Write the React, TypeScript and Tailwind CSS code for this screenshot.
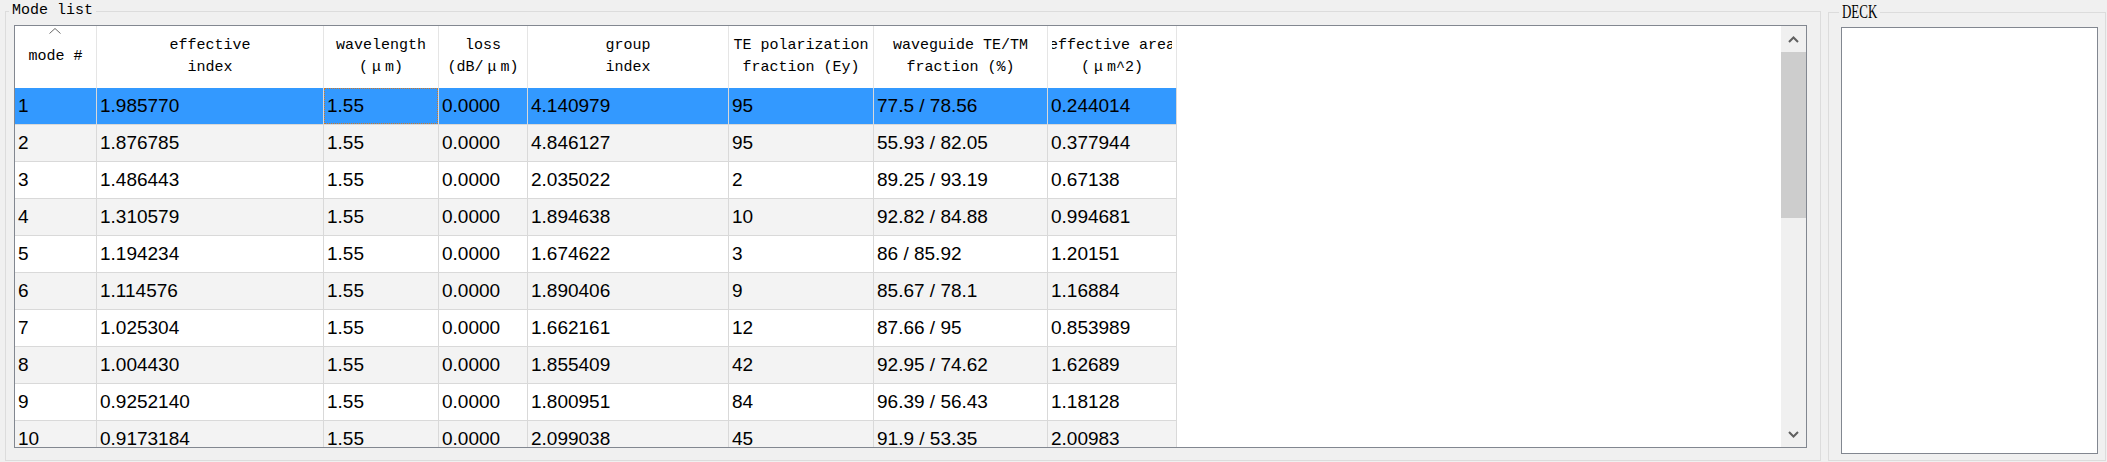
import React from "react";

const widths = [82, 227, 115, 89, 201, 145, 174, 129];

const headers: React.ReactNode[][] = [
  [["mode #"]],
  [["effective"], ["index"]],
  [["wavelength"], ["(", <span key="u" className="px-[4px]">μ</span>, "m)"]],
  [["loss"], ["(dB/", <span key="u" className="px-[4px]">μ</span>, "m)"]],
  [["group"], ["index"]],
  [["TE polarization"], ["fraction (Ey)"]],
  [["waveguide TE/TM"], ["fraction (%)"]],
  [["effective area"], ["(", <span key="u" className="px-[4px]">μ</span>, "m^2)"]],
];

const rows = [
  ["1", "1.985770", "1.55", "0.0000", "4.140979", "95", "77.5 / 78.56", "0.244014"],
  ["2", "1.876785", "1.55", "0.0000", "4.846127", "95", "55.93 / 82.05", "0.377944"],
  ["3", "1.486443", "1.55", "0.0000", "2.035022", "2", "89.25 / 93.19", "0.67138"],
  ["4", "1.310579", "1.55", "0.0000", "1.894638", "10", "92.82 / 84.88", "0.994681"],
  ["5", "1.194234", "1.55", "0.0000", "1.674622", "3", "86 / 85.92", "1.20151"],
  ["6", "1.114576", "1.55", "0.0000", "1.890406", "9", "85.67 / 78.1", "1.16884"],
  ["7", "1.025304", "1.55", "0.0000", "1.662161", "12", "87.66 / 95", "0.853989"],
  ["8", "1.004430", "1.55", "0.0000", "1.855409", "42", "92.95 / 74.62", "1.62689"],
  ["9", "0.9252140", "1.55", "0.0000", "1.800951", "84", "96.39 / 56.43", "1.18128"],
  ["10", "0.9173184", "1.55", "0.0000", "2.099038", "45", "91.9 / 53.35", "2.00983"],
];

const Chevron = ({ up }: { up?: boolean }) => (
  <svg width="11" height="7" viewBox="0 0 11 7">
    <polyline
      points={up ? "1,6 5.5,1.5 10,6" : "1,1 5.5,5.5 10,1"}
      fill="none"
      stroke="#606060"
      strokeWidth="2"
    />
  </svg>
);

const ModeTable = () => (
  <div className="flex-1 overflow-hidden">
    <div className="flex h-[62px] bg-white font-['Liberation_Mono',monospace] text-[15px] leading-[22px] text-black">
      {headers.map((lines, i) => (
        <div
          key={i}
          style={{ width: widths[i] }}
          className="relative flex shrink-0 border-r border-[#e5e5e5] px-[4px]"
        >
          {i === 0 && (
            <svg className="absolute left-[34px] top-[2px]" width="12" height="6" viewBox="0 0 12 6">
              <polyline points="0.5,5.5 6,0.5 11.5,5.5" fill="none" stroke="#6a6a6a" strokeWidth="1" />
            </svg>
          )}
          <div className="flex w-full flex-col items-center justify-center overflow-hidden">
            {lines.map((l, j) => (
              <div key={j} className="whitespace-nowrap">
                {l}
              </div>
            ))}
          </div>
        </div>
      ))}
    </div>
    {rows.map((r, ri) => (
      <div key={ri} className="flex h-[37px] font-['Liberation_Sans',Arial,sans-serif] text-[19px] text-black">
        {r.map((c, ci) => (
          <div
            key={ci}
            style={{ width: widths[ci] }}
            className={`relative flex shrink-0 items-center overflow-hidden whitespace-nowrap border-r border-b border-[#d9d9d9] pl-[3px] ${
              ri === 0 ? "bg-[#3399ff]" : ri % 2 === 1 ? "bg-[#f3f3f3]" : "bg-white"
            }`}
          >
            {c}
            {ri === 0 && ci === 2 && (
              <span className="absolute inset-0 border border-dotted border-[#c8782e]" />
            )}
          </div>
        ))}
      </div>
    ))}
  </div>
);

const Scrollbar = () => (
  <div className="flex w-[25px] shrink-0 flex-col bg-[#f0f0f0]">
    <div className="flex h-[26px] items-center justify-center">
      <Chevron up />
    </div>
    <div className="h-[166px] bg-[#cdcdcd]" />
    <div className="flex-1" />
    <div className="flex h-[26px] items-center justify-center">
      <Chevron />
    </div>
  </div>
);

export default function App() {
  return (
    <div className="flex h-[462px] w-[2107px] gap-[7px] overflow-hidden bg-[#f0f0f0] pl-[5px]">
      <fieldset className="h-[461px] w-[1816px] shrink-0 border border-[#dcdcdc] pl-[8px] pr-[13px]">
        <legend className="ml-[-5px] px-[3px] font-['Liberation_Mono',monospace] text-[15px] leading-[22px] text-black">
          Mode list
        </legend>
        <div className="mt-[3px] flex h-[423px] border border-[#828790] bg-white">
          <ModeTable />
          <Scrollbar />
        </div>
      </fieldset>
      <fieldset className="h-[461px] w-[278px] shrink-0 border border-[#dcdcdc] pl-[12px] pr-[7px]">
        <legend className="ml-[-2px] w-[41px] px-[3px] text-black">
          <span className="inline-block origin-left scale-x-[0.72] font-['Liberation_Serif',serif] text-[18px] leading-[22px]">
            DECK
          </span>
        </legend>
        <div className="mt-[3px] h-[427px] border border-[#828790] bg-white" />
      </fieldset>
    </div>
  );
}
